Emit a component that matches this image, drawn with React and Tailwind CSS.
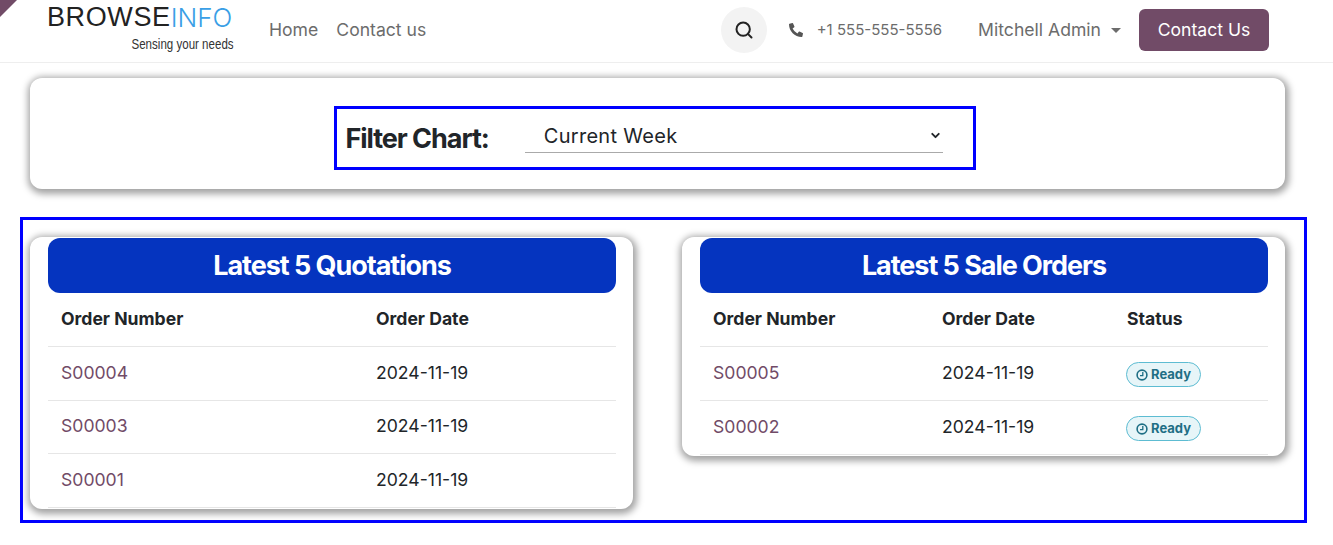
import { Search, ChevronDown } from 'lucide-react'
import { FaPhoneAlt } from 'react-icons/fa'

function ReadyBadge() {
  return (
    <span className="inline-flex items-center gap-[3px] h-[25px] w-[75px] -ml-px justify-center rounded-full border-[1.5px] border-[#5dbcd2] bg-[#e7f5f8] text-[13px] font-bold text-[#1f6f85] mt-[3px] align-middle">
      <svg width="12" height="12" viewBox="0 0 12 12" fill="none" stroke="currentColor" strokeWidth="1.6">
        <circle cx="6" cy="6" r="4.9" />
        <path d="M6.8 3v3.7H4" strokeWidth="1.3" />
      </svg>
      Ready
    </span>
  )
}

function OrderCard({ title, columns, rows, showStatus }) {
  return (
    <div className="bg-white rounded-[12px] shadow-[1px_2px_7px_3px_#a3a3a3] pl-[18px] pr-[17px] pt-px pb-px self-start">
      <div className="h-[55px] pt-[1px] bg-[#0534bf] rounded-[12px] flex items-center justify-center text-white text-[27px] font-bold tracking-[-1.05px]">
        {title}
      </div>
      <table className="w-[568px] table-fixed text-[17.6px] text-[#212529]">
        <colgroup>
          {columns.map((c) => (
            <col key={c.label} className={c.width} />
          ))}
        </colgroup>
        <thead>
          <tr className="h-[53px] border-b border-[#e6e6e6]">
            {columns.map((c) => (
              <th key={c.label} className="text-left font-bold pl-[13px]">{c.label}</th>
            ))}
          </tr>
        </thead>
        <tbody>
          {rows.map((r) => (
            <tr key={r.id} className={r.short ? 'h-[53px] border-b border-[#e6e6e6]' : 'h-[54px] border-b border-[#e6e6e6]'}>
              <td className="pl-[13px]"><a className="text-[#714b67]">{r.id}</a></td>
              <td className="pl-[13px]">2024-11-19</td>
              {showStatus && <td className="pl-[13px]"><ReadyBadge /></td>}
            </tr>
          ))}
        </tbody>
      </table>
    </div>
  )
}

export default function App() {
  return (
    <div className="relative min-h-[545px] bg-white font-['Inter',sans-serif] overflow-hidden">
      <div className="absolute top-0 left-0 w-[17px] h-[17px] bg-[#714b67] [clip-path:polygon(0_0,100%_0,0_100%)]" />

      <header className="h-[63px] border-b border-[#eeeeee] flex items-center pl-[47px] pb-[2px] text-[17.6px] text-[#6c6c6c]">
        <div className="w-[187px] h-[62px] pt-[5px] shrink-0">
          <div className="h-[27px] flex items-center leading-none whitespace-nowrap">
            <span className="text-[27px] text-[#222222] font-['Liberation_Sans',sans-serif] tracking-[0.6px]">BROWSE</span>
            <span className="text-[26px] font-light text-[#3a9fe6]">INFO</span>
          </div>
          <div className="mt-[3px] text-right leading-[18px] whitespace-nowrap">
            <span className="inline-block text-[15px] text-[#333333] font-['Liberation_Sans',sans-serif] origin-right scale-x-[0.77]">
              Sensing your needs
            </span>
          </div>
        </div>
        <nav className="flex gap-[18px] ml-[35px]">
          <a>Home</a>
          <a>Contact us</a>
        </nav>
        <div className="ml-auto flex items-center pr-[64px]">
          <div className="w-[46px] h-[46px] rounded-full bg-[#f3f3f3] flex items-center justify-center text-[#222222]">
            <Search size={20} strokeWidth={2.4} />
          </div>
          <FaPhoneAlt className="ml-[22px] text-[14px] text-[#555555]" />
          <span className="ml-[14px] text-[15px]">+1 555-555-5556</span>
          <span className="ml-[36px]">Mitchell Admin</span>
          <span className="ml-[10px] w-0 h-0 border-x-[5px] border-x-transparent border-t-[5px] border-t-[#6c6c6c]" />
          <button className="ml-[18px] w-[130px] h-[42px] rounded-[6px] bg-[#714b67] text-white text-[17.6px]">Contact Us</button>
        </div>
      </header>

      <section className="mx-[30px] mt-[15px] w-[1255px] h-[111px] bg-white rounded-[12px] shadow-[1px_2px_7px_3px_#a3a3a3] pt-[28px] pr-[6px] flex justify-center">
        <div className="w-[642px] h-[64px] border-[3px] border-[#0000ff] flex items-center pl-[9px]">
          <label className="text-[27px] font-bold tracking-[-1.05px] text-[#212529] mt-[3px] whitespace-nowrap">Filter Chart:</label>
          <div className="ml-[36px] w-[418px] h-[30px] -mt-[1px] border-b border-[#aaaaaa] flex items-start justify-between pl-[19px] pr-px text-[#212529]">
            <span className="text-[20px] leading-[26px] tracking-[0.3px]">Current Week</span>
            <ChevronDown size={13} strokeWidth={3.5} className="mt-[6px]" />
          </div>
        </div>
      </section>

      <section className="ml-[20px] mt-[28px] w-[1287px] h-[306px] border-[3px] border-[#0000ff] pl-[7px] pr-[19px] pt-[17px] grid grid-cols-[603px_603px] gap-x-[49px]">
        <OrderCard
          title="Latest 5 Quotations"
          columns={[
            { label: 'Order Number', width: 'w-[315px]' },
            { label: 'Order Date', width: 'w-[253px]' },
          ]}
          rows={[{ id: 'S00004' }, { id: 'S00003', short: true }, { id: 'S00001' }]}
        />
        <OrderCard
          title="Latest 5 Sale Orders"
          columns={[
            { label: 'Order Number', width: 'w-[229px]' },
            { label: 'Order Date', width: 'w-[185px]' },
            { label: 'Status', width: 'w-[154px]' },
          ]}
          rows={[{ id: 'S00005' }, { id: 'S00002' }]}
          showStatus
        />
      </section>
    </div>
  )
}
